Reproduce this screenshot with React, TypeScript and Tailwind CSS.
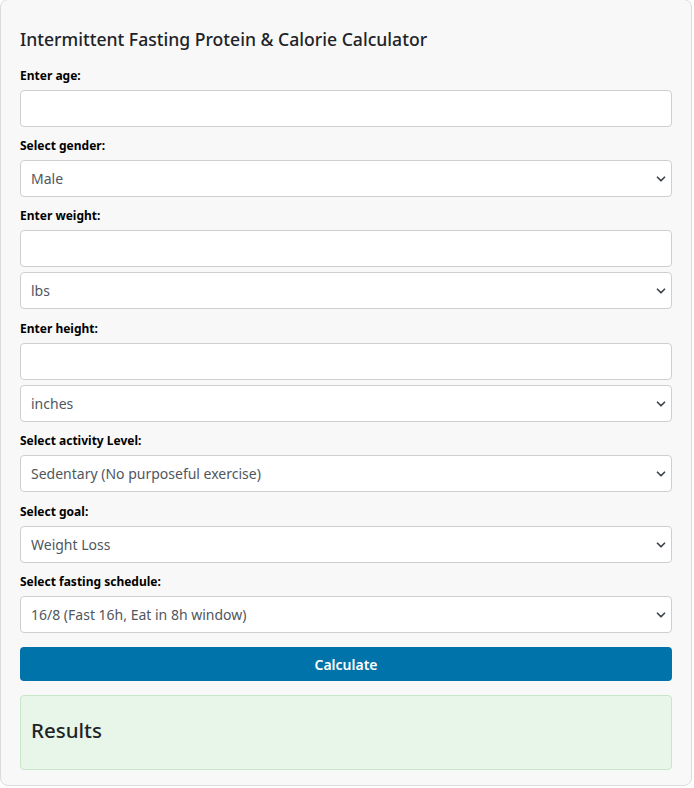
import { ChevronDown } from 'lucide-react';

const label = 'block text-[12px] font-bold leading-[18px] text-[#000] mb-[5px]';
const field =
  'block w-full h-[37px] rounded-[4px] border border-[#cfcfcf] bg-white px-[10px] text-[14px] text-[#50575e] outline-none';

function Select({ value, className = '' }: { value: string; className?: string }) {
  return (
    <div className={`relative ${className}`}>
      <select className={`${field} appearance-none`} defaultValue={value}>
        <option>{value}</option>
      </select>
      <ChevronDown
        className="pointer-events-none absolute right-[4px] top-1/2 -translate-y-1/2 text-[#3c434a]"
        size={14}
        strokeWidth={3}
      />
    </div>
  );
}

export default function App() {
  return (
    <div className="min-h-[788px] bg-white font-['Noto_Sans','Open_Sans',sans-serif]">
      <div className="w-[692px] -mt-px rounded-[8px] border border-[#dcdcdc] bg-[#f8f8f8] px-[19px] pt-[28px] pb-[15px]">
        <h2 className="text-[17.6px] font-medium leading-[22px] text-[#1d2327] mb-[17px]">
          Intermittent Fasting Protein &amp; Calorie Calculator
        </h2>

        <label className={label}>Enter age:</label>
        <input type="text" className={`${field} mb-[10px]`} />

        <label className={label}>Select gender:</label>
        <Select value="Male" className="mb-[10px]" />

        <label className={label}>Enter weight:</label>
        <input type="text" className={`${field} mb-[5px]`} />
        <Select value="lbs" className="mb-[11px]" />

        <label className={label}>Enter height:</label>
        <input type="text" className={`${field} mb-[5px]`} />
        <Select value="inches" className="mb-[10px]" />

        <label className={label}>Select activity Level:</label>
        <Select value="Sedentary (No purposeful exercise)" className="mb-[11px]" />

        <label className={label}>Select goal:</label>
        <Select value="Weight Loss" className="mb-[10px]" />

        <label className={label}>Select fasting schedule:</label>
        <Select value="16/8 (Fast 16h, Eat in 8h window)" className="mb-[14px]" />

        <button className="block w-full h-[34px] rounded-[4px] bg-[#0073aa] text-[14px] font-semibold text-white">
          Calculate
        </button>

        <div className="mt-[14px] h-[75px] rounded-[4px] border border-[#c8e6c9] bg-[#e8f5e9] px-[10px] pb-[4px] flex items-center">
          <h3 className="text-[20.5px] font-medium text-[#1d2327]">Results</h3>
        </div>
      </div>
    </div>
  );
}
